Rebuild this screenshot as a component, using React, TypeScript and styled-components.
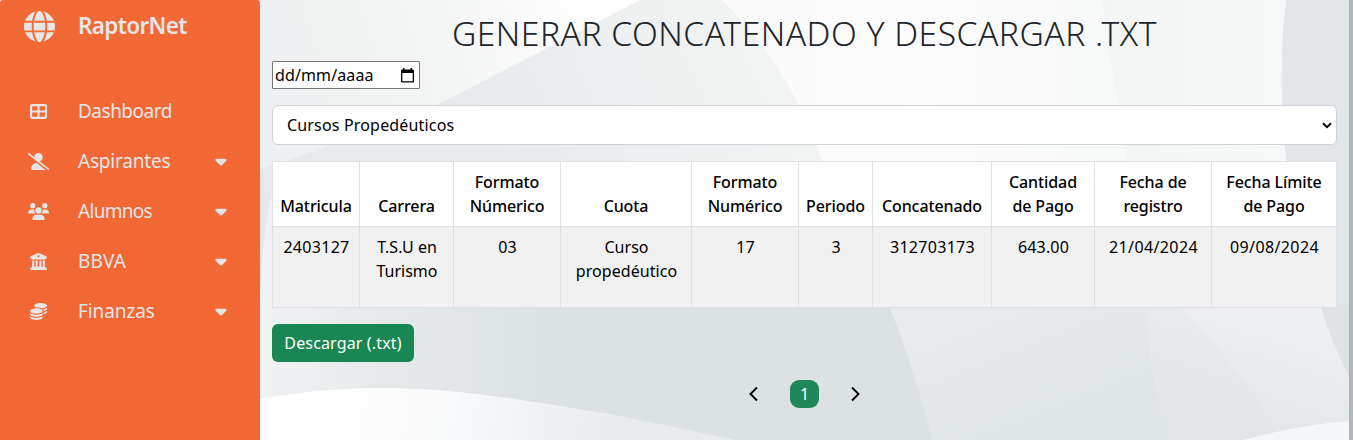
import React from 'react';
import styled, { createGlobalStyle } from 'styled-components';
import {
  FaGlobe, FaTableCellsLarge, FaUserSlash, FaUsers, FaBuildingColumns, FaCoins, FaCaretDown,
} from 'react-icons/fa6';

const GlobalStyle = createGlobalStyle`
  * { box-sizing: border-box; }
  body { margin: 0; overflow: hidden; font-family: "Noto Sans", "Open Sans", sans-serif; font-size: 16px; line-height: 24px; color: #000; }
`;

const Page = styled.div`
  position: relative;
  display: flex;
  width: 1353px;
  height: 440px;
  overflow: hidden;
`;

const Backdrop = styled.svg`
  position: absolute;
  inset: 0;
  z-index: -1;
`;

const Sidebar = styled.nav`
  width: 260px;
  flex: none;
  background: rgba(242, 99, 46, 0.96);
  border-radius: 3px 3px 0 0;
  color: #e6e6e6;
`;

const Brand = styled.div`
  display: flex;
  align-items: center;
  height: 60px;
  padding: 0 0 8px;
  font-size: 22.5px;
  font-weight: 600;
  letter-spacing: -0.65px;
`;

const BrandIcon = styled.span`
  display: flex;
  justify-content: center;
  width: 78px;
  font-size: 31px;
`;

const Menu = styled.ul`
  list-style: none;
  margin: 0;
  padding: 26px 0 0;
`;

const MenuItem = styled.li`
  display: flex;
  align-items: center;
  height: 50px;
`;

const MenuIcon = styled.span<{ $size: number }>`
  display: flex;
  justify-content: center;
  width: 78px;
  padding-right: 1px;
  font-size: ${(p) => p.$size}px;
`;

const MenuLabel = styled.span<{ $track: number }>`
  flex: 1;
  font-size: 19px;
  letter-spacing: ${(p) => p.$track}px;
`;

const MenuArrow = styled.span`
  display: flex;
  justify-content: center;
  width: 78px;
  font-size: 18px;
  padding-bottom: 1px;
`;

const Content = styled.main`
  flex: 1;
  display: flex;
  flex-direction: column;
  align-items: flex-start;
  padding: 0 12px;
`;

const Title = styled.h1`
  align-self: center;
  margin: 14px 0 9px;
  font-size: 33.6px;
  line-height: 38px;
  font-weight: 300;
  letter-spacing: 0.5px;
  color: #212529;
  white-space: nowrap;
`;

const DateField = styled.div`
  display: flex;
  align-items: center;
  justify-content: space-between;
  width: 148px;
  height: 28px;
  padding: 0 5px 0 2px;
  border: 1px solid #767676;
  border-radius: 1px;
  background: #fff;
  letter-spacing: 0.12px;
`;

const SelectField = styled.div`
  display: flex;
  align-items: center;
  justify-content: space-between;
  width: 1065px;
  height: 40px;
  margin: 16px 0;
  padding: 0 4px 0 14px;
  border: 1px solid #ced4da;
  border-radius: 6px;
  background: #fff;
  letter-spacing: 0.17px;
`;

const Table = styled.table`
  width: 1065px;
  table-layout: fixed;
  border-collapse: separate;
  border-spacing: 0;
  border: solid #dee2e6;
  border-width: 0 1px 1px 0;
  text-align: center;
`;

const Col = styled.col<{ $width: number }>`
  width: ${(p) => p.$width}px;
`;

const HeadCell = styled.th`
  height: 65px;
  padding: 8px 4px;
  border: solid #dee2e6;
  border-width: 1px 0 0 1px;
  background: #fff;
  vertical-align: bottom;
  font-weight: 500;
  letter-spacing: -0.1px;
  white-space: pre-line;
`;

const Cell = styled.td<{ $track: number }>`
  height: 81px;
  padding: 8px 3px 8px 4px;
  border: solid #dee2e6;
  border-width: 1px 0 0 1px;
  background: #f1f1f1;
  vertical-align: top;
  letter-spacing: ${(p) => p.$track}px;
  white-space: pre-line;
`;

const DownloadButton = styled.button`
  width: 142px;
  height: 38px;
  margin-top: 16px;
  padding: 0;
  border: 0;
  border-radius: 6px;
  background: #198754;
  color: #fff;
  font: inherit;
  letter-spacing: 0.15px;
`;

const Pagination = styled.div`
  align-self: center;
  display: flex;
  align-items: center;
  gap: 31px;
  margin-top: 18px;
`;

const CurrentPage = styled.span`
  width: 29px;
  height: 28px;
  border-radius: 9px;
  background: #1e885a;
  color: #fff;
  text-align: center;
  line-height: 28px;
`;

const ScrollTrack = styled.div`
  flex: none;
  width: 4px;
  background: #b2b7bf;
`;

const menu = [
  { label: 'Dashboard', icon: <FaTableCellsLarge />, size: 17, track: -0.5, open: false },
  { label: 'Aspirantes', icon: <FaUserSlash />, size: 21, track: -0.2, open: true },
  { label: 'Alumnos', icon: <FaUsers />, size: 21, track: -0.7, open: true },
  { label: 'BBVA', icon: <FaBuildingColumns />, size: 17, track: 0.1, open: true },
  { label: 'Finanzas', icon: <FaCoins />, size: 17, track: -0.1, open: true },
];

const columns = [
  { head: 'Matricula', value: '2403127', width: 87, track: 0.3 },
  { head: 'Carrera', value: 'T.S.U en\nTurismo', width: 94, track: 0 },
  { head: 'Formato\nNúmerico', value: '03', width: 107, track: 0.2 },
  { head: 'Cuota', value: 'Curso\npropedéutico', width: 131, track: 0.05 },
  { head: 'Formato\nNumérico', value: '17', width: 107, track: 0.2 },
  { head: 'Periodo', value: '3', width: 74, track: 0 },
  { head: 'Concatenado', value: '312703173', width: 119, track: 0.3 },
  { head: 'Cantidad\nde Pago', value: '643.00', width: 103, track: 0.15 },
  { head: 'Fecha de\nregistro', value: '21/04/2024', width: 117, track: 0.38 },
  { head: 'Fecha Límite\nde Pago', value: '09/08/2024', width: 125, track: 0.38 },
];

function Waves() {
  return (
    <Backdrop width="1353" height="440" viewBox="0 0 1353 440">
      <defs>
        <linearGradient id="glow" gradientUnits="userSpaceOnUse" x1="300" y1="110" x2="580" y2="20">
          <stop offset="0" stopColor="#eef0f1" /><stop offset="0.6" stopColor="#f5f6f6" /><stop offset="1" stopColor="#fdfdfd" />
        </linearGradient>
        <linearGradient id="band" gradientUnits="userSpaceOnUse" x1="480" y1="160" x2="780" y2="20">
          <stop offset="0" stopColor="#e7eaeb" /><stop offset="1" stopColor="#f3f5f5" />
        </linearGradient>
        <linearGradient id="sheet" gradientUnits="userSpaceOnUse" x1="760" y1="0" x2="1286" y2="0">
          <stop offset="0" stopColor="#fafafa" /><stop offset="0.3" stopColor="#fcfcfc" /><stop offset="0.65" stopColor="#f7f8f8" /><stop offset="1" stopColor="#f7f8f8" />
        </linearGradient>
        <linearGradient id="fold" gradientUnits="userSpaceOnUse" x1="1100" y1="0" x2="1286" y2="0">
          <stop offset="0" stopColor="#f3f5f5" /><stop offset="1" stopColor="#f7f8f8" />
        </linearGradient>
        <linearGradient id="dusk" gradientUnits="userSpaceOnUse" x1="260" y1="0" x2="550" y2="0">
          <stop offset="0" stopColor="#f1f2f4" /><stop offset="0.45" stopColor="#e5e9ea" /><stop offset="1" stopColor="#dce1e3" />
        </linearGradient>
        <linearGradient id="lower" gradientUnits="userSpaceOnUse" x1="960" y1="290" x2="1020" y2="440">
          <stop offset="0" stopColor="#e9ecee" /><stop offset="1" stopColor="#dfe4e5" />
        </linearGradient>
        <linearGradient id="facet" gradientUnits="userSpaceOnUse" x1="1260" y1="310" x2="1220" y2="440">
          <stop offset="0" stopColor="#e9ecee" /><stop offset="1" stopColor="#e1e5e7" />
        </linearGradient>
        <linearGradient id="petal" gradientUnits="userSpaceOnUse" x1="1290" y1="300" x2="1250" y2="430">
          <stop offset="0" stopColor="#f0f1f3" /><stop offset="1" stopColor="#e3e7e9" />
        </linearGradient>
        <linearGradient id="hill" gradientUnits="userSpaceOnUse" x1="320" y1="390" x2="620" y2="450">
          <stop offset="0" stopColor="#fefefe" /><stop offset="0.45" stopColor="#f8f9fa" /><stop offset="1" stopColor="#e7ebec" />
        </linearGradient>
      </defs>
      <rect width="1353" height="440" fill="url(#glow)" />
      <path d="M640 0 L437 105 Q350 140 260 170 L260 300 L900 300 L822 160 Q790 65 722 0Z" fill="url(#band)" />
      <path d="M722 0 Q800 75 822 162 L860 300 H1353 V0Z" fill="url(#sheet)" />
      <path d="M1102 0 Q1108 60 1120 105 L1126 165 H1290 V0Z" fill="url(#fold)" />
      <path d="M1286 0 Q1277 80 1286 160 L1353 400 V0Z" fill="#e2e6e8" />
      <path d="M260 300 Q262 240 273 185 V240 H940 V440 H260Z" fill="url(#dusk)" />
      <path d="M889 305 Q915 370 932 440 H1353 V385 Q1332 345 1320 305Z" fill="url(#lower)" />
      <path d="M1146 305 Q1150 380 1168 440 H1353 V384 Q1332 345 1320 305Z" fill="url(#facet)" />
      <path d="M1178 305 Q1225 350 1285 440 H1353 V384 Q1332 345 1320 305Z" fill="url(#petal)" />
      <path d="M1320 305 Q1332 345 1353 384 V305Z" fill="#dfe3e5" />
      <path d="M0 500 Q120 430 260 399 C400 373 510 399 610 414 Q680 428 740 441 V500Z" fill="url(#hill)" />
      <path d="M1240 441 Q1300 424 1353 421 V441Z" fill="#f5f6f8" />
      <path d="M128 0 Q80 80 55 140 Q0 240 0 300 V440 H182 Q182 300 140 180 Q115 90 130 0Z" fill="#cdd2d4" />
    </Backdrop>
  );
}

export default function App() {
  return (
    <Page>
      <GlobalStyle />
      <Waves />
      <Sidebar>
        <Brand><BrandIcon><FaGlobe /></BrandIcon>RaptorNet</Brand>
        <Menu>
          {menu.map((m) => (
            <MenuItem key={m.label}>
              <MenuIcon $size={m.size}>{m.icon}</MenuIcon>
              <MenuLabel $track={m.track}>{m.label}</MenuLabel>
              {m.open && <MenuArrow><FaCaretDown /></MenuArrow>}
            </MenuItem>
          ))}
        </Menu>
      </Sidebar>
      <Content>
        <Title>GENERAR CONCATENADO Y DESCARGAR .TXT</Title>
        <DateField>
          dd/mm/aaaa
          <svg width="13" height="15" viewBox="0 0 13 15">
            <path d="M2 0h1.500v1.500h6V0H11v1.500h1a1 1 0 0 1 1 1V13.500a1 1 0 0 1-1 1H1a1 1 0 0 1-1-1V2.500a1 1 0 0 1 1-1h1zM1.300 5v8.200h10.400V5z" fillRule="evenodd" />
          </svg>
        </DateField>
        <SelectField>
          Cursos Propedéuticos
          <svg width="10" height="7" viewBox="0 0 10 7" fill="none" stroke="#000" strokeWidth="2">
            <path d="M1 1.200 5 5.200 9 1.200" />
          </svg>
        </SelectField>
        <Table>
          <colgroup>{columns.map((c, i) => <Col key={i} $width={c.width} />)}</colgroup>
          <thead><tr>{columns.map((c, i) => <HeadCell key={i}>{c.head}</HeadCell>)}</tr></thead>
          <tbody><tr>{columns.map((c, i) => <Cell key={i} $track={c.track}>{c.value}</Cell>)}</tr></tbody>
        </Table>
        <DownloadButton>Descargar (.txt)</DownloadButton>
        <Pagination>
          <svg width="11" height="16" viewBox="0 0 11 16" fill="none" stroke="#000" strokeWidth="1.900"><path d="M9 1.500 2.500 8 9 14.500" /></svg>
          <CurrentPage>1</CurrentPage>
          <svg width="11" height="16" viewBox="0 0 11 16" fill="none" stroke="#000" strokeWidth="1.900"><path d="M2 1.500 8.500 8 2 14.500" /></svg>
        </Pagination>
      </Content>
      <ScrollTrack />
    </Page>
  );
}
